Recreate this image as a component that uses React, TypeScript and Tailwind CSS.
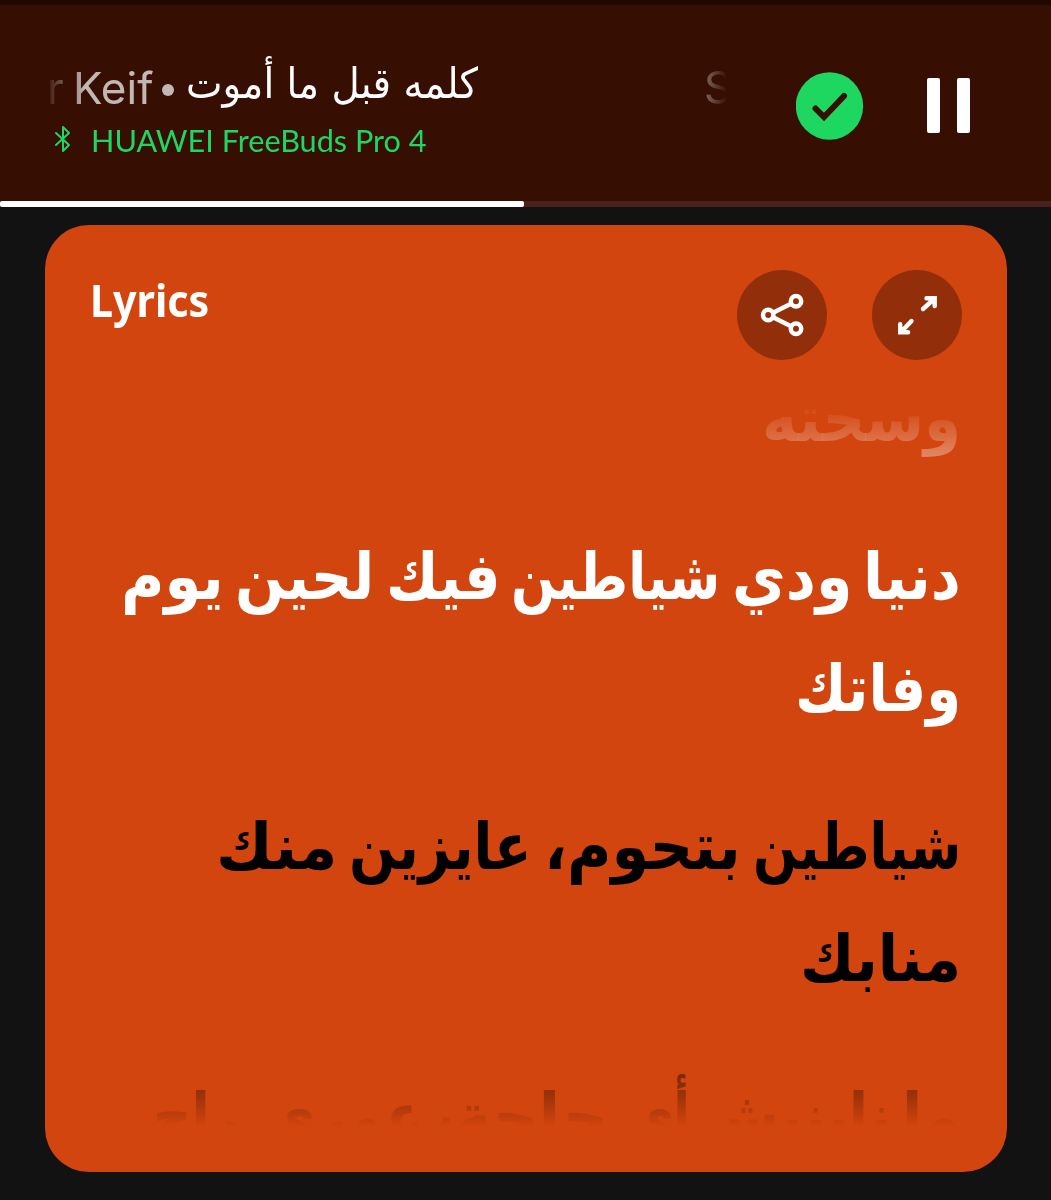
import { useLayoutEffect, useRef, useState } from "react";

type FitProps = { text: string; width: number; gap?: number; rtl?: boolean; className?: string };

/** Text that is condensed or stretched horizontally to fill a given width. */
function Fit({ text, width, gap = 0, rtl = false, className = "" }: FitProps) {
  const ref = useRef<HTMLSpanElement>(null);
  const [scale, setScale] = useState(1);
  useLayoutEffect(() => {
    if (ref.current) setScale(width / ref.current.offsetWidth);
  }, [text, width]);
  return (
    <span
      dir={rtl ? "rtl" : "ltr"}
      className="flex shrink-0"
      style={{ width, marginInlineStart: gap }}
    >
      <span
        ref={ref}
        className={`inline-block shrink-0 whitespace-nowrap ${rtl ? "origin-right" : "origin-left"} ${className}`}
        style={{ transform: `scaleX(${scale})` }}
      >
        {text}
      </span>
    </span>
  );
}

type Word = [text: string, width: number, gap: number];

function Line({ words, className = "" }: { words: Word[]; className?: string }) {
  return (
    <p
      dir="rtl"
      className={`flex h-[112px] items-center font-['DejaVu_Sans',sans-serif] text-[65px] font-bold leading-none ${className}`}
    >
      {words.map(([text, width, gap]) => (
        <Fit key={text} rtl text={text} width={width} gap={gap} />
      ))}
    </p>
  );
}

function NowPlaying() {
  return (
    <header className="flex h-[207px] flex-col border-t-[5px] border-[#200900] bg-[#370f02]">
      <div className="flex h-[196px] items-center pl-[45px] pr-[81px]">
        <div className="flex w-[682px] flex-col">
          <div className="flex h-[72px] items-center overflow-hidden whitespace-nowrap text-[44px] text-white font-['Inter',sans-serif] [mask-image:linear-gradient(to_right,transparent_0,black_40px,black_640px,transparent_682px)]">
            <span className="w-[28px] shrink-0 pl-[2px] pt-[10px] opacity-70">r</span>
            <span className="w-[89px] shrink-0 pt-[10px] opacity-70">Keif</span>
            <span className="mr-[12px] mt-[14px] h-[12px] w-[12px] shrink-0 rounded-full bg-white/70" />
            <Fit rtl text="كلمه قبل ما أموت" width={292} className="text-[42px] font-['DejaVu_Sans',sans-serif]" />
            <span className="ml-[226px] pt-[8px] opacity-70">S</span>
          </div>
          <div className="flex h-[40px] items-center text-[#1ed760]">
            <svg className="ml-[9px] mr-[19px] h-[28px] w-[18px]" viewBox="0 0 18 28" fill="none" stroke="currentColor" strokeWidth="2" strokeLinejoin="round" strokeLinecap="round">
              <path d="M2 8 15 20 9 26V2l6 6L2 20" />
            </svg>
            <Fit text="HUAWEI FreeBuds Pro 4" width={336} className="pt-[2px] font-['Lato',sans-serif] text-[30px]" />
          </div>
        </div>
        <div className="ml-auto flex items-center gap-[63px] pt-[5px]">
          <svg className="h-[68px] w-[68px]" viewBox="0 0 68 68">
            <circle cx="33.5" cy="34" r="33.7" fill="#1ed760" />
            <path d="m19.500 36.500 8.500 8.500L48 24" fill="none" stroke="#370f02" strokeWidth="6" strokeLinecap="round" />
          </svg>
          <div className="flex gap-[17px]">
            <span className="h-[55px] w-[13px] rounded-[2px] bg-white" />
            <span className="h-[55px] w-[13px] rounded-[2px] bg-white" />
          </div>
        </div>
      </div>
      <div className="h-[6px] bg-[#49231a]">
        <div className="h-full w-[524px] rounded-[2px] bg-white" />
      </div>
    </header>
  );
}

function Lyrics() {
  return (
    <section className="mx-[45px] mt-[18px] h-[947px] w-[962px] overflow-hidden rounded-[44px] bg-[#d3450f]">
      <div className="flex h-[180px] items-start justify-between px-[45px] pt-[45px]">
        <h1 className="mt-[2px] font-['Noto_Sans',sans-serif] text-[44px] font-bold leading-[56px] text-white">
          <Fit text="Lyrics" width={119} />
        </h1>
        <div className="flex gap-[45px] text-white">
          <button className="flex h-[90px] w-[90px] items-center justify-center rounded-full bg-[#922f0a]">
            <svg className="h-[90px] w-[90px]" viewBox="0 0 90 90" fill="none" stroke="currentColor" strokeWidth="4.5">
              <circle cx="31.2" cy="45" r="5.2" />
              <circle cx="59" cy="31.3" r="5.2" />
              <circle cx="59" cy="58.7" r="5.2" />
              <path d="m36 42.700 18-9M36 47.300l18 9" />
            </svg>
          </button>
          <button className="flex h-[90px] w-[90px] items-center justify-center rounded-full bg-[#922f0a]">
            <svg className="h-[90px] w-[90px]" viewBox="0 0 90 90" fill="none" stroke="currentColor" strokeWidth="4.4" strokeLinecap="round">
              <path d="M51 39 61.500 29.500M54.500 28.200H62.700V36.100M39.500 51 29.500 61.500M28.200 54.200V62.200H36.100" />
            </svg>
          </button>
        </div>
      </div>
      <div className="h-[722px] overflow-hidden px-[46px] [mask-image:linear-gradient(to_bottom,transparent_0,black_110px,black_600px,transparent_722px)]">
        <Line className="-mt-[43px] text-white/75" words={[["وسحته", 199, 0]]} />
        <Line
          className="mt-[46px] text-white"
          words={[["دنيا", 98, 0], ["ودي", 120, 11], ["شياطين", 209, 12], ["فيك", 115, 10], ["لحين", 139, 12], ["يوم", 103, 11]]}
        />
        <Line className="text-white" words={[["وفاتك", 166, 0]]} />
        <Line
          className="mt-[46px] text-black"
          words={[["شياطين", 208, 0], ["بتحوم،", 197, 12], ["عايزين", 183, 12], ["منك", 121, 12]]}
        />
        <Line className="text-black" words={[["منابك", 161, 0]]} />
        <Line
          className="mt-[46px] text-black"
          words={[["ما", 59, 0], ["نابنيش", 190, 11], ["أي", 60, 11], ["حاجة،", 178, 22], ["عمري", 158, 7], ["راح", 88, 24]]}
        />
      </div>
    </section>
  );
}

export default function App() {
  return (
    <main className="h-[1200px] w-[1051px] overflow-hidden bg-[#121212]">
      <NowPlaying />
      <Lyrics />
    </main>
  );
}
